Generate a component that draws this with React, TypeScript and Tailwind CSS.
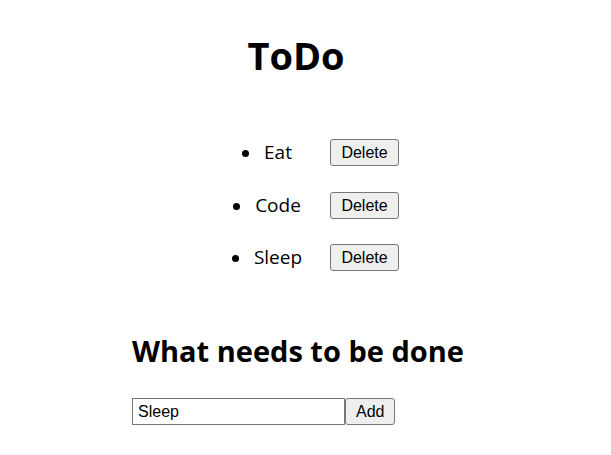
import React, { useState } from 'react';

const btn =
  "font-['Liberation_Sans',Arial,sans-serif] text-[16px] leading-[19px] bg-[#efefef] border border-[#767676] rounded-[3px] px-[10px] py-[3px] text-black";

export default function App() {
  const [todos, setTodos] = useState(['Eat', 'Code', 'Sleep']);
  const [text, setText] = useState('Sleep');

  return (
    <div className="min-h-screen bg-white text-black font-['Open_Sans','Noto_Sans',sans-serif]">
      <h1 className="pt-[27px] pr-[19px] text-center text-[38px] font-bold leading-[56px]">ToDo</h1>

      {/* List */}
      <ul className="mt-[56px] flex flex-col gap-[25.5px]">
        {todos.map((t, i) => (
          <li key={i} className="flex h-[27px] items-center justify-center">
            <span className="w-[110px] text-center text-[19px] leading-[27px]">
              <span className="mr-[15px] inline-block h-[7px] w-[7px] rounded-full bg-black align-middle" />
              {t}
            </span>
            <button
              className={`ml-[8px] w-[69px] ${btn}`}
              onClick={() => setTodos(todos.filter((_, j) => j !== i))}
            >
              Delete
            </button>
          </li>
        ))}
      </ul>

      {/* Form */}
      <div className="mx-auto mt-[60px] w-[347px]">
        <h2 className="text-[29px] font-bold leading-[40px]">What needs to be done</h2>
        <div className="mt-[27px] flex">
          <input
            value={text}
            onChange={e => setText(e.target.value)}
            className="h-[27px] w-[213px] border border-[#767676] px-[5px] font-['Liberation_Sans',Arial,sans-serif] text-[16px] text-black outline-none"
          />
          <button
            className={`h-[27px] w-[50px] px-0 py-0 ${btn}`}
            onClick={() => {
              if (text.trim()) setTodos([...todos, text]);
            }}
          >
            Add
          </button>
        </div>
      </div>
    </div>
  );
}
